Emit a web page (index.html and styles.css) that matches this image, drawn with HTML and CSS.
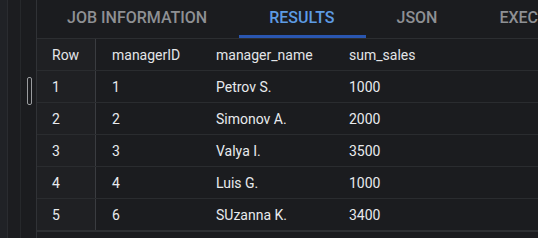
FILE: index.html
```html
<!DOCTYPE html>
<html>
<head>
  <link rel="stylesheet" href="styles.css">
</head>
<body>

<div class="page">
  <div class="gutter">
    <div class="gutter-a"></div>
    <div class="gutter-b"></div>
    <div class="gutter-c">
      <div class="thumb"></div>
    </div>
  </div>

  <div class="main">
    <div class="tabs">
      <div class="tab">JOB INFORMATION</div>
      <div class="tab active">RESULTS</div>
      <div class="tab">JSON</div>
      <div class="tab">EXECUTION DETAILS</div>
    </div>

    <table class="results">
      <tr>
        <th class="rownum">Row</th>
        <th class="c1">managerID</th>
        <th class="c2">manager_name</th>
        <th class="c3">sum_sales</th>
        <th></th>
      </tr>
      <tr><td class="rownum">1</td><td>1</td><td>Petrov S.</td><td>1000</td><td></td></tr>
      <tr><td class="rownum">2</td><td>2</td><td>Simonov A.</td><td>2000</td><td></td></tr>
      <tr><td class="rownum">3</td><td>3</td><td>Valya I.</td><td>3500</td><td></td></tr>
      <tr><td class="rownum">4</td><td>4</td><td>Luis G.</td><td>1000</td><td></td></tr>
      <tr><td class="rownum">5</td><td>6</td><td>SUzanna K.</td><td>3400</td><td></td></tr>
    </table>
  </div>
</div>

</body>
</html>
```

FILE: styles.css
```css
body {
  margin: 0;
  background-color: #1b1c1f;
  font-family: Roboto, "Liberation Sans", sans-serif;
  color: #e8eaed;
}

.page {
  display: flex;
  width: 538px;
  height: 238px;
  overflow: hidden;
}

.gutter {
  display: flex;
  flex: none;
  width: 37px;
  height: 238px;
}

.gutter-a {
  width: 7px;
  background-color: #202226;
  border-right: 1px solid #2a2c30;
}

.gutter-b {
  width: 12px;
  background-color: #1c1d20;
  border-right: 1px solid #26282b;
}

.gutter-c {
  width: 15px;
  background-color: #1b1c1f;
  border-right: 1px solid #303236;
  padding-top: 77px;
}

.thumb {
  margin-left: 6px;
  width: 3px;
  height: 26px;
  border: 1px solid #9a9c9f;
  border-radius: 2px;
}

.main {
  flex: 1;
  min-width: 0;
}

.tabs {
  display: flex;
  height: 38px;
  border-bottom: 1px solid #2c2e31;
  white-space: nowrap;
  overflow: hidden;
}

.tab {
  flex: none;
  padding: 0 32px 0 30px;
  line-height: 35px;
  font-size: 16px;
  font-weight: 500;
  color: #8e9094;
  border-bottom: 3px solid transparent;
}

.tab.active {
  color: #5d9be4;
  border-bottom-color: #2a56b0;
}

.results {
  border-collapse: collapse;
  width: 100%;
  font-size: 14px;
}

.results th,
.results td {
  height: 31px;
  padding: 0 0 0 16px;
  text-align: left;
  font-weight: 400;
  border-bottom: 1px solid #2a2c2f;
  white-space: nowrap;
}

.results th {
  color: #e3e5e8;
}

.results tr:last-child td {
  border-bottom: 2px solid #2e3033;
}

.results .rownum {
  width: 43px;
  padding-left: 15px;
  background-color: #1f2023;
  border-right: 1px solid #3a3c40;
}

.results .c1 {
  width: 88px;
}

.results .c2 {
  width: 117px;
}

.results .c3 {
  width: 100px;
}
```
